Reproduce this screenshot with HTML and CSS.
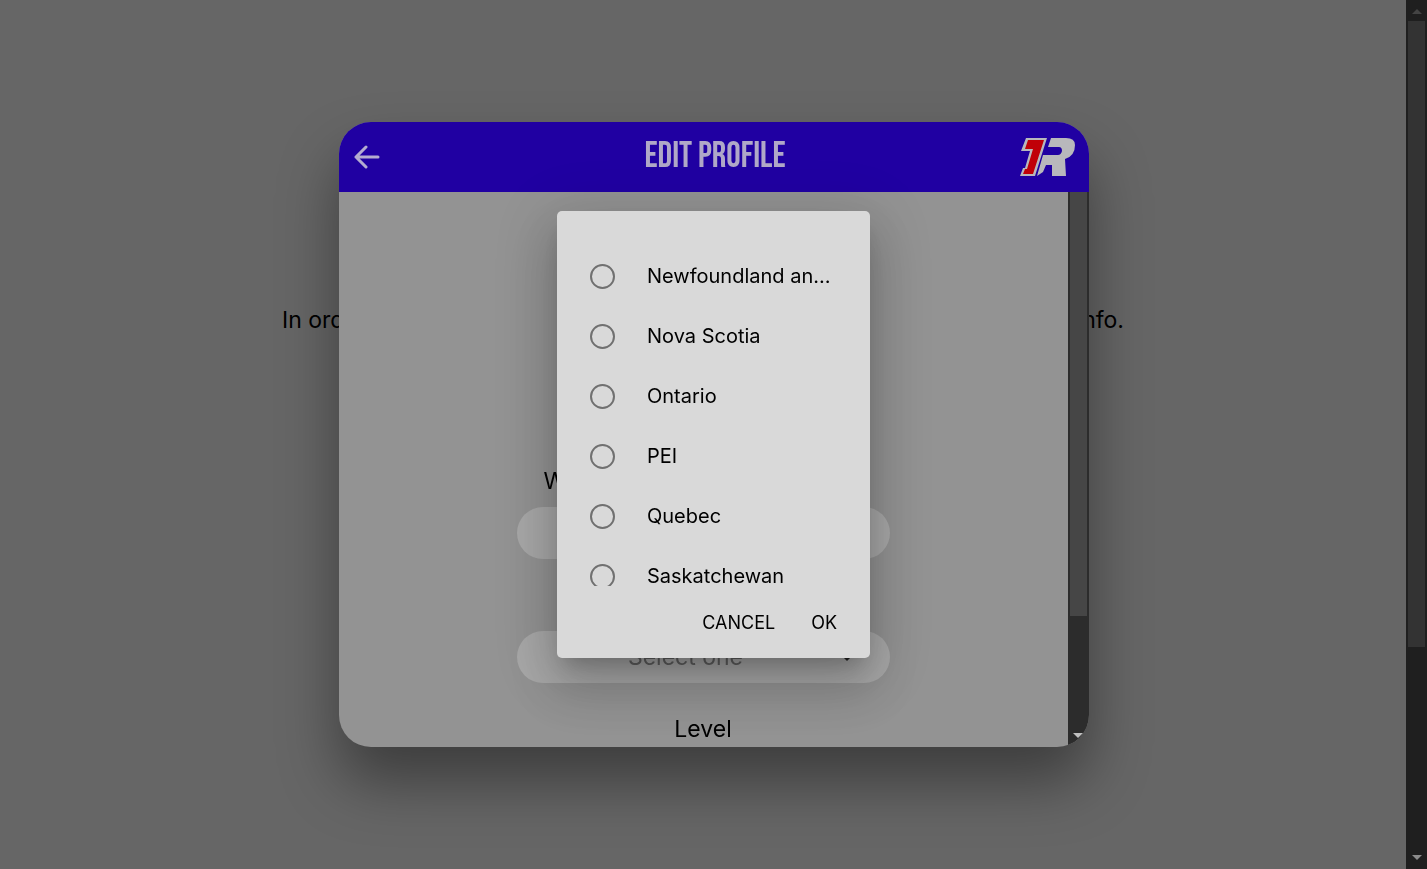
FILE: index.html
```html
<!DOCTYPE html>
<html lang="en">
<head>
  <meta charset="UTF-8">
  <title>Edit Profile</title>
  <meta name="viewport" content="width=device-width, initial-scale=1.0">
  <link rel="stylesheet" href="styles.css">
</head>
<body>

  <div class="page">
    <main class="page-content">
      <p class="intro"><span>In order to get started,</span><span>please complete your profile info.</span></p>
    </main>
    <div class="scrollbar">
      <svg class="arrow" viewBox="0 0 10 6"><path d="M0 6 L5 1 L10 6Z"/></svg>
      <div class="thumb"></div>
      <svg class="arrow down" viewBox="0 0 10 6"><path d="M0 0 L10 0 L5 5Z"/></svg>
    </div>
  </div>

  <div class="overlay">
    <section class="modal">
      <header class="modal-header">
        <button class="back" type="button" aria-label="Back">
          <svg viewBox="0 0 26 24" width="26" height="24"><path d="M12 2 L2 12 L12 22 M2 12 L24 12"/></svg>
        </button>
        <h1>EDIT PROFILE</h1>
        <svg class="brand" viewBox="0 0 56 40" width="56" height="40">
          <path class="light" d="M6 1 H27 L15 39 H0 L3 31 H5 L10 14 H1Z"/>
          <path class="red" d="M8 3 H24 L13 37 H3 L5 32 H7 L13 12 H5Z"/>
          <path class="light" d="M31 1 H46 Q55 1 55 8 Q55 19 45 22 L46 39 H32 V28 H26 L23 35 L17 39 L23 18 H38 Q41 18 42 14 Q42 10 39 10 H28Z"/>
        </svg>
      </header>
      <div class="modal-body">
        <form class="fields">
          <label for="province">What province do you live in?</label>
          <div class="select-box">
            <select id="province"><option></option></select>
            <svg class="caret" viewBox="0 0 10 5"><path d="M0 0 L10 0 L5 5Z"/></svg>
          </div>
          <label for="sport">Sport</label>
          <div class="select-box">
            <select id="sport"><option>Select one</option></select>
            <svg class="caret" viewBox="0 0 10 5"><path d="M0 0 L10 0 L5 5Z"/></svg>
          </div>
          <label for="level">Level</label>
          <div class="select-box">
            <select id="level"><option>Select one</option></select>
          </div>
        </form>
        <div class="scrollbar inner">
          <div class="thumb"></div>
          <svg class="arrow down" viewBox="0 0 10 6"><path d="M0 0 L10 0 L5 5Z"/></svg>
        </div>
      </div>
    </section>
  </div>

  <div class="overlay">
    <section class="alert" role="dialog" aria-label="Province">
      <div class="options">
        <label class="option"><input type="radio" name="province"><span>Newfoundland and Labrador</span></label>
        <label class="option"><input type="radio" name="province"><span>Nova Scotia</span></label>
        <label class="option"><input type="radio" name="province"><span>Ontario</span></label>
        <label class="option"><input type="radio" name="province"><span>PEI</span></label>
        <label class="option"><input type="radio" name="province"><span>Quebec</span></label>
        <label class="option"><input type="radio" name="province"><span>Saskatchewan</span></label>
      </div>
      <div class="alert-buttons">
        <button type="button">CANCEL</button>
        <button type="button">OK</button>
      </div>
    </section>
  </div>

</body>
</html>
```

FILE: styles.css
```css
* {
  box-sizing: border-box;
}
body {
  margin: 0;
  font-family: Inter, sans-serif;
  font-size: 23px;
  color: #000;
  background: #666;
  overflow: hidden;
}
button, select {
  font-family: inherit;
  border: none;
  background: none;
  cursor: pointer;
}
.page {
  display: flex;
  height: 100vh;
}
.page-content {
  flex: 1;
  padding-top: 306px;
}
.intro {
  display: flex;
  justify-content: space-between;
  max-width: 842px;
  margin: 0 auto;
  line-height: 28px;
}

/* scrollbars */
.scrollbar {
  display: flex;
  flex-direction: column;
  align-items: center;
  width: 21px;
  padding: 8px 0;
  background: #1f1f1f;
}
.scrollbar .thumb {
  width: 17px;
  height: 72vh;
  margin-top: 7px;
  background: #333;
}
.arrow {
  width: 10px;
  height: 6px;
  flex-shrink: 0;
  fill: #444;
}
.arrow.down {
  margin-top: auto;
  fill: #8c8c8c;
}
.scrollbar.inner {
  padding: 0 0 8px;
  background: #2c2c2c;
}
.inner .thumb {
  height: 424px;
  margin-top: 0;
  background: #464646;
}
.inner .arrow {
  fill: #c0c0c0;
}

/* modal */
.overlay {
  position: fixed;
  inset: 0;
  display: flex;
  align-items: center;
  justify-content: center;
}
.modal {
  display: flex;
  flex-direction: column;
  width: 750px;
  max-width: 100%;
  height: 72vh;
  border-radius: 32px;
  overflow: hidden;
  background: #939393;
  box-shadow: 0 35px 60px rgba(0, 0, 0, 0.4);
}
.modal-header {
  display: flex;
  align-items: center;
  justify-content: space-between;
  height: 70px;
  flex-shrink: 0;
  padding: 0 12px 0 15px;
  background: #2000a2;
}
.modal-header h1 {
  margin: 0;
  font-family: "Bebas Neue", Roboto, sans-serif;
  font-size: 36px;
  font-weight: 400;
  line-height: 44px;
  color: #b0a8c8;
}
.back {
  display: flex;
  width: 56px;
  padding: 0;
}
.back svg {
  fill: none;
  stroke: #b4acd0;
  stroke-width: 3;
  stroke-linecap: round;
  stroke-linejoin: round;
}
.brand .light {
  fill: #b8b8bc;
}
.brand .red {
  fill: #c00008;
}
.modal-body {
  display: flex;
  flex: 1;
  min-height: 0;
}
.fields {
  flex: 1;
  display: flex;
  flex-direction: column;
  align-items: center;
  padding-top: 275px;
  overflow: hidden;
}
.fields label {
  line-height: 28px;
  margin-bottom: 12px;
}
.select-box {
  position: relative;
  width: 373px;
  margin-bottom: 32px;
}
.select-box select {
  display: block;
  width: 100%;
  height: 52px;
  padding: 0 35px 0 0;
  appearance: none;
  border-radius: 26px;
  background: #a8a8a8;
  color: #606060;
  font-size: 23px;
  text-align: center;
  text-align-last: center;
}
.caret {
  position: absolute;
  top: 25px;
  right: 38px;
  width: 10px;
  height: 5px;
  fill: #222;
}

/* alert */
.alert {
  width: 313px;
  padding-top: 35px;
  border-radius: 5px;
  background: #d9d9d9;
  box-shadow: 0 14px 19px -9px rgba(0, 0, 0, 0.2), 0 30px 48px 4px rgba(0, 0, 0, 0.14), 0 11px 58px 10px rgba(0, 0, 0, 0.12);
}
.options {
  height: 340px;
  overflow: hidden;
}
.option {
  display: flex;
  align-items: center;
  gap: 32px;
  height: 60px;
  padding: 0 33px;
  font-size: 20px;
}
.option input {
  appearance: none;
  flex-shrink: 0;
  width: 25px;
  height: 25px;
  margin: 0;
  border: 2px solid #707070;
  border-radius: 50%;
}
.option span {
  overflow: hidden;
  text-overflow: ellipsis;
  white-space: nowrap;
}
.alert-buttons {
  display: flex;
  justify-content: flex-end;
  height: 72px;
  padding: 17px 20px;
}
.alert-buttons button {
  height: 38px;
  padding: 0 13px;
  margin-left: 10px;
  font-size: 18px;
  color: #000;
}
```
